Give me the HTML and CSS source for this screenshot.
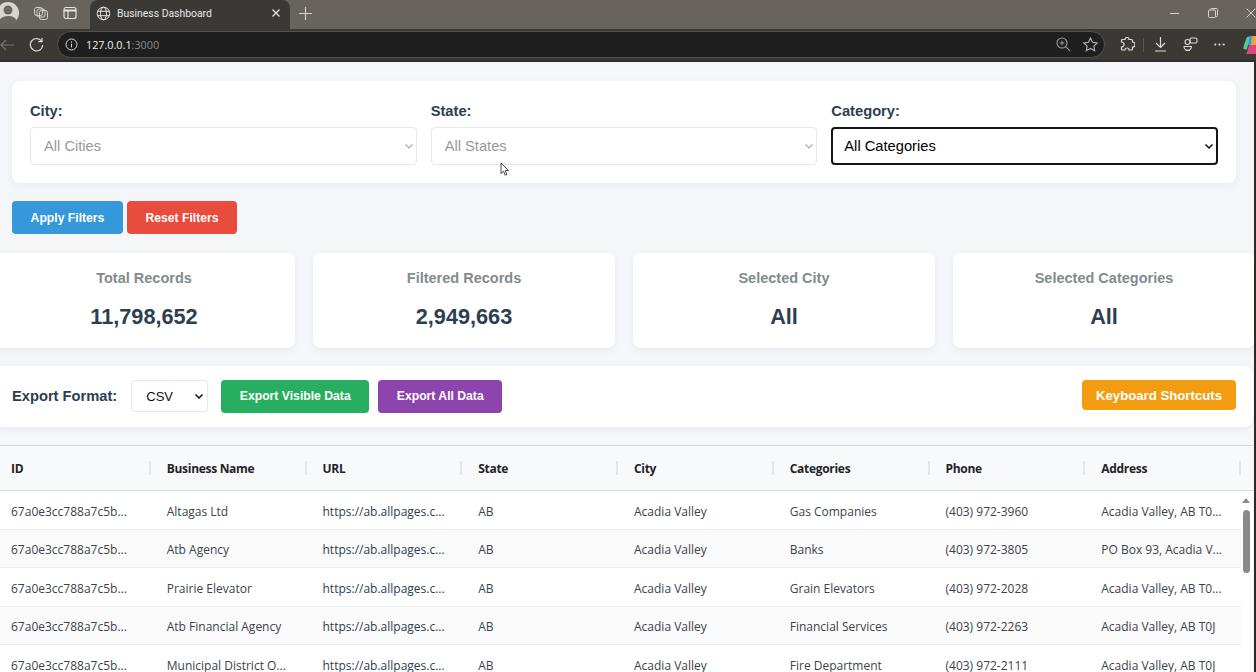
FILE: index.html
```html
<!DOCTYPE html>
<html lang="en">
<head>
    <meta charset="UTF-8">
    <title>Business Dashboard</title>
    <link rel="stylesheet" href="styles.css">
</head>
<body>
    <header class="browser">
        <div class="tabstrip">
            <div class="avatar">
                <svg width="22" height="22" viewBox="0 0 22 22"><circle cx="8" cy="11" r="11" fill="#d8d6d2"/><circle cx="8" cy="8" r="4.5" fill="#6b6862"/><path d="M-1 20c1-5 5-6 9-6s8 1 9 6a11 11 0 0 1-18 0z" fill="#6b6862"/></svg>
            </div>
            <svg class="tool-icon workspaces" width="16" height="16" viewBox="0 0 16 16" fill="none" stroke="#d5d3cf"><rect x="1.5" y="2.5" width="8" height="8" rx="2"/><rect x="4" y="4" width="8" height="8" rx="2"/><rect x="6.5" y="5.5" width="8" height="9" rx="2"/></svg>
            <svg class="tool-icon tabs-icon" width="14" height="14" viewBox="0 0 14 14" fill="none" stroke="#e6e4e0" stroke-width="1.2"><rect x="1" y="1.5" width="12" height="11" rx="2"/><path d="M1 4.5h12" stroke-width="2"/><path d="M5 4.5v8"/></svg>
            <div class="tab">
                <svg width="15" height="15" viewBox="0 0 15 15" fill="none" stroke="#e8e8e8"><circle cx="7.5" cy="7.5" r="6.3"/><ellipse cx="7.5" cy="7.5" rx="3" ry="6.3"/><path d="M1.5 5.3h12M1.5 9.7h12"/></svg>
                <span class="tab-title">Business Dashboard</span>
                <svg class="tab-close" width="10" height="10" viewBox="0 0 10 10" stroke="#e8e8e8" stroke-width="1.2"><path d="M1.5 1.5l7 7M8.5 1.5l-7 7"/></svg>
            </div>
            <svg class="new-tab" width="13" height="13" viewBox="0 0 13 13" stroke="#d5d3cf" stroke-width="1.1"><path d="M6.5 0v13M0 6.5h13"/></svg>
            <div class="window-controls">
                <svg width="10" height="10" viewBox="0 0 10 10" stroke="#d5d3cf"><path d="M0 5.5h9"/></svg>
                <svg width="10" height="10" viewBox="0 0 10 10" fill="none" stroke="#d5d3cf"><rect x="0.5" y="2" width="7" height="7.5" rx="1"/><path d="M2.5 2V1.5a1 1 0 0 1 1-1h5a1 1 0 0 1 1 1v6a1 1 0 0 1-1 1H7.5"/></svg>
                <svg width="10" height="10" viewBox="0 0 10 10" stroke="#d5d3cf"><path d="M0.5 0.5l9 9M9.5 0.5l-9 9"/></svg>
            </div>
        </div>
        <div class="toolbar">
            <svg class="back" width="14" height="12" viewBox="0 0 14 12" fill="none" stroke="#77756f" stroke-width="1.2"><path d="M14 6H1M6 1L1 6l5 5"/></svg>
            <svg class="reload" width="15" height="15" viewBox="0 0 15 15" fill="none" stroke="#dcdcdc" stroke-width="1.2"><path d="M12.8 4.5A6.2 6.2 0 1 0 13.7 8"/><path d="M13 1v3.7H9.3"/></svg>
            <div class="address">
                <svg width="13" height="13" viewBox="0 0 13 13" fill="none" stroke="#d8d8d8"><circle cx="6.5" cy="6.5" r="5.5"/><path d="M6.5 5.7v3.6M6.5 3.4v1.2"/></svg>
                <span class="url">127.0.0.1<span class="url-port">:3000</span></span>
                <svg class="zoom-icon" width="15" height="15" viewBox="0 0 15 15" fill="none" stroke="#9a9a9a" stroke-width="1.1"><circle cx="6" cy="6" r="5"/><path d="M9.7 9.7l4.5 4.5M3.7 6h4.6M6 3.7v4.6"/></svg>
                <svg width="15" height="15" viewBox="0 0 15 15" fill="none" stroke="#b4b4b4" stroke-width="1.1"><path d="M7.5 1l2 4.3 4.7.6-3.4 3.2.9 4.7-4.200-2.300-4.200 2.300.9-4.700L.8 5.900l4.700-.6z"/></svg>
            </div>
            <svg class="extensions" width="15" height="15" viewBox="0 0 15 15" fill="none" stroke="#dcdcdc" stroke-width="1.2"><path d="M5 2.500a2 2 0 0 1 4 0h2.500a1 1 0 0 1 1 1V5a2 2 0 0 1 0 5v2a1 1 0 0 1-1 1H9a2 2 0 0 0-4 0H2.500a1 1 0 0 1-1-1v-2a2 2 0 0 0 0-5V3.500a1 1 0 0 1 1-1z"/></svg>
            <span class="toolbar-sep"></span>
            <svg width="13" height="15" viewBox="0 0 13 15" fill="none" stroke="#dcdcdc" stroke-width="1.2"><path d="M6.500 0v10M2 6l4.500 4.500L11 6M1 14h11"/></svg>
            <svg width="15" height="15" viewBox="0 0 15 15" fill="none" stroke="#dcdcdc" stroke-width="1.1"><rect x="7" y="1" width="7" height="5" rx="1.500"/><circle cx="4.500" cy="5" r="2.500"/><path d="M1 9.500h7.500a3.500 3.500 0 0 1-7.500 0zM2.500 13.500h4.500"/></svg>
            <svg width="11" height="3" viewBox="0 0 11 3" fill="#dcdcdc"><circle cx="1.300" cy="1.500" r="1.100"/><circle cx="5.500" cy="1.500" r="1.100"/><circle cx="9.700" cy="1.500" r="1.100"/></svg>
            <svg class="copilot" width="16" height="18" viewBox="0 0 16 18"><path d="M4 1.500Q5 0 7 0h7v9H1z" fill="#2f9be8"/><path d="M3.500 2Q4.500 .5 6.500 1L4 13.500H1.500Q0 13 .5 11z" fill="#58c98a"/><path d="M9 0h7v9H8z" fill="#f2a03a"/><path d="M6 9h10v6l-3 3H3Q5 15 6 9z" fill="#e0457b"/></svg>
        </div>
    </header>

    <main class="page">
        <section class="filters">
            <div class="filter-group">
                <label class="filter-label">City:</label>
                <select class="filter-select is-disabled" disabled><option>All Cities</option></select>
            </div>
            <div class="filter-group">
                <label class="filter-label">State:</label>
                <select class="filter-select is-disabled" disabled><option>All States</option></select>
            </div>
            <div class="filter-group">
                <label class="filter-label">Category:</label>
                <select class="filter-select is-focused"><option>All Categories</option></select>
            </div>
        </section>
        <svg class="cursor" width="10" height="15" viewBox="0 0 10 15" fill="#fff" stroke="#333" stroke-width="0.9"><path d="M1 1v10.500l2.500-2.300 1.700 4 1.700-.7-1.700-3.900H8.500z"/></svg>

        <div class="filter-actions">
            <button class="btn btn-blue">Apply Filters</button>
            <button class="btn btn-red">Reset Filters</button>
        </div>

        <section class="stats">
            <div class="stat-card"><h3>Total Records</h3><p>11,798,652</p></div>
            <div class="stat-card"><h3>Filtered Records</h3><p>2,949,663</p></div>
            <div class="stat-card"><h3>Selected City</h3><p>All</p></div>
            <div class="stat-card"><h3>Selected Categories</h3><p>All</p></div>
        </section>

        <section class="export-bar">
            <span class="export-label">Export Format:</span>
            <select class="export-select"><option>CSV</option></select>
            <button class="btn btn-green">Export Visible Data</button>
            <button class="btn btn-purple">Export All Data</button>
            <button class="btn btn-orange">Keyboard Shortcuts</button>
        </section>

        <section class="table-wrap">
            <div class="table-head">
                <div class="cell">ID</div>
                <div class="cell">Business Name</div>
                <div class="cell">URL</div>
                <div class="cell">State</div>
                <div class="cell">City</div>
                <div class="cell">Categories</div>
                <div class="cell">Phone</div>
                <div class="cell">Address</div>
            </div>
            <div class="table-body">
                <div class="rows">
                    <div class="row">
                        <div class="cell">67a0e3cc788a7c5b...</div><div class="cell">Altagas Ltd</div><div class="cell link">https://ab.allpages.c...</div><div class="cell">AB</div><div class="cell">Acadia Valley</div><div class="cell">Gas Companies</div><div class="cell">(403) 972-3960</div><div class="cell">Acadia Valley, AB T0...</div>
                    </div>
                    <div class="row alt">
                        <div class="cell">67a0e3cc788a7c5b...</div><div class="cell">Atb Agency</div><div class="cell link">https://ab.allpages.c...</div><div class="cell">AB</div><div class="cell">Acadia Valley</div><div class="cell">Banks</div><div class="cell">(403) 972-3805</div><div class="cell">PO Box 93, Acadia V...</div>
                    </div>
                    <div class="row">
                        <div class="cell">67a0e3cc788a7c5b...</div><div class="cell">Prairie Elevator</div><div class="cell link">https://ab.allpages.c...</div><div class="cell">AB</div><div class="cell">Acadia Valley</div><div class="cell">Grain Elevators</div><div class="cell">(403) 972-2028</div><div class="cell">Acadia Valley, AB T0...</div>
                    </div>
                    <div class="row alt">
                        <div class="cell">67a0e3cc788a7c5b...</div><div class="cell">Atb Financial Agency</div><div class="cell link">https://ab.allpages.c...</div><div class="cell">AB</div><div class="cell">Acadia Valley</div><div class="cell">Financial Services</div><div class="cell">(403) 972-2263</div><div class="cell">Acadia Valley, AB T0J</div>
                    </div>
                    <div class="row">
                        <div class="cell">67a0e3cc788a7c5b...</div><div class="cell">Municipal District O...</div><div class="cell link">https://ab.allpages.c...</div><div class="cell">AB</div><div class="cell">Acadia Valley</div><div class="cell">Fire Department</div><div class="cell">(403) 972-2111</div><div class="cell">Acadia Valley, AB T0J</div>
                    </div>
                </div>
                <div class="scrollbar">
                    <span class="scroll-up"></span>
                    <span class="scroll-thumb"></span>
                </div>
            </div>
        </section>
    </main>
</body>
</html>
```

FILE: styles.css
```css
html, body {
    margin: 0;
    height: 672px;
    overflow: hidden;
}
body {
    font-family: "Liberation Sans", Arial, sans-serif;
    background-color: #f4f6fa;
}

/* browser frame */
.browser {
    height: 62px;
    background-color: #3a3936;
    border-bottom: 2px solid #2f2e2c;
    box-sizing: border-box;
    font-family: "Open Sans", sans-serif;
}
.tabstrip {
    height: 29px;
    padding-bottom: 3px;
    box-sizing: border-box;
    background-color: #68645d;
    display: flex;
    align-items: center;
}
.avatar {
    width: 33px;
    display: flex;
}
.tool-icon.tabs-icon {
    margin-left: 14px;
}
.tab {
    width: 200px;
    height: 29px;
    margin: 3px 0 0 13px;
    padding: 0 6px 3px;
    box-sizing: border-box;
    background-color: #3a3936;
    border-radius: 8px 8px 0 0;
    display: flex;
    align-items: center;
    color: #e8e8e8;
    font-family: Roboto, sans-serif;
    font-size: 10.400px;
}
.tab-title {
    margin-left: 6px;
    flex: 1;
}
.tab-close {
    margin-right: 3px;
}
.new-tab {
    margin-left: 9px;
}
.window-controls {
    margin-left: auto;
    display: flex;
    gap: 28px;
}
.toolbar {
    height: 31px;
    display: flex;
    align-items: center;
    gap: 16px;
    overflow: hidden;
}
.toolbar > * {
    flex-shrink: 0;
}
.reload {
    margin-left: -1px;
}
.address {
    width: 1048px;
    height: 27px;
    margin-left: -3px;
    padding: 0 6px 0 7px;
    box-sizing: border-box;
    background-color: #1f1f1f;
    border: 1px solid #55534f;
    border-radius: 14px;
    display: flex;
    align-items: center;
    gap: 8px;
    color: #f0f0f0;
    font-size: 10.800px;
}
.url {
    flex: 1;
}
.url-port {
    color: #8b8b8b;
}
.zoom-icon {
    margin-right: 4px;
}
.extensions {
    margin-left: -1px;
}
.toolbar-sep {
    width: 1px;
    height: 14px;
    background-color: #5a5855;
    margin: 0 -6.500px 0 -8px;
}
.copilot {
    margin-left: 2px;
}

/* page */
.page {
    position: relative;
    height: 610px;
    box-sizing: border-box;
    border-right: 2px solid #2b2a28;
    overflow: hidden;
}
.filters {
    margin: 19px 18px 0 12px;
    padding: 20px 18px 0;
    height: 102px;
    box-sizing: border-box;
    background-color: #fff;
    border-radius: 8px;
    box-shadow: 0 2px 8px rgba(0, 0, 0, 0.05);
    display: grid;
    grid-template-columns: repeat(3, 1fr);
    gap: 14px;
}
.filter-label {
    display: block;
    font-size: 14.700px;
    font-weight: bold;
    color: #2c3e50;
    line-height: 20px;
    margin-bottom: 6px;
}
.filter-select {
    width: 100%;
    height: 38px;
    padding: 0 13px;
    font-family: "Liberation Sans", Arial, sans-serif;
    font-size: 14.700px;
    border: 1px solid #e6e8ec;
    border-radius: 4px;
    box-sizing: border-box;
    appearance: none;
    background: #fff url("data:image/svg+xml,%3Csvg xmlns='http://www.w3.org/2000/svg' width='8' height='5' fill='none' stroke='%23a8a8a8' stroke-width='1.2'%3E%3Cpath d='M.5.5l3.500 3.500 3.500-3.500'/%3E%3C/svg%3E") no-repeat right 3px center;
}
.filter-select.is-disabled {
    color: #9a9a9a;
    opacity: 1;
}
.filter-select.is-focused {
    color: #000;
    border: 2px solid #151515;
    border-radius: 4px;
    padding: 0 11px;
    background: #fff url("data:image/svg+xml,%3Csvg xmlns='http://www.w3.org/2000/svg' width='8' height='5' fill='none' stroke='%23111' stroke-width='1.5'%3E%3Cpath d='M.5.5l3.500 3.500 3.500-3.500'/%3E%3C/svg%3E") no-repeat right 3px center;
}
.cursor {
    position: absolute;
    left: 500px;
    top: 100px;
}

.filter-actions {
    margin: 18px 0 0 12px;
    display: flex;
    gap: 4px;
}
.btn {
    height: 33px;
    border: none;
    border-radius: 4px;
    color: #fff;
    font-family: "Liberation Sans", Arial, sans-serif;
    font-size: 12.200px;
    font-weight: bold;
    cursor: pointer;
    padding: 0;
}
.btn-blue {
    width: 111px;
    background-color: #3498db;
}
.btn-red {
    width: 110px;
    background-color: #e74c3c;
}
.btn-green {
    width: 148px;
    padding-bottom: 2px;
    background-color: #27ae60;
}
.btn-purple {
    width: 124px;
    padding-bottom: 2px;
    background-color: #8e44ad;
}
.btn-orange {
    width: 154px;
    height: 30px;
    margin: 0 0 3px auto;
    font-size: 13.200px;
    background-color: #f39c12;
}

/* stats */
.stats {
    margin: 19px 0 0 -7px;
    display: grid;
    grid-template-columns: repeat(4, 302px);
    gap: 18px;
}
.stat-card {
    height: 95px;
    background-color: #fff;
    border-radius: 8px;
    box-shadow: 0 2px 8px rgba(0, 0, 0, 0.05);
    text-align: center;
}
.stat-card h3 {
    margin: 0;
    padding-top: 16px;
    font-size: 14.500px;
    line-height: 18px;
    font-weight: bold;
    color: #7f8c8d;
}
.stat-card p {
    margin: 16px 0 0;
    font-size: 21.700px;
    line-height: 28px;
    font-weight: bold;
    color: #2c3e50;
}

/* export */
.export-bar {
    margin: 18px 1px 0 -7px;
    height: 61px;
    padding: 0 17px 0 19px;
    box-sizing: border-box;
    background-color: #fff;
    border-radius: 8px;
    box-shadow: 0 2px 8px rgba(0, 0, 0, 0.05);
    display: flex;
    align-items: center;
}
.export-label {
    padding-bottom: 1px;
    font-size: 14.700px;
    font-weight: bold;
    color: #2c3e50;
}
.export-select {
    width: 77px;
    height: 32px;
    margin: 0 13px 1px 14px;
    padding: 0 14px;
    font-family: "Liberation Sans", Arial, sans-serif;
    font-size: 13px;
    color: #111;
    border: 1px solid #e6e8ec;
    border-radius: 4px;
    appearance: none;
    background: #fff url("data:image/svg+xml,%3Csvg xmlns='http://www.w3.org/2000/svg' width='8' height='5' fill='none' stroke='%23111' stroke-width='1.5'%3E%3Cpath d='M.5.5l3.500 3.500 3.500-3.500'/%3E%3C/svg%3E") no-repeat right 4px center;
}
.btn-green + .btn-purple {
    margin-left: 9px;
}

/* table */
.table-wrap {
    margin: 18px 1px 0 -7px;
    background-color: #fff;
    border-top: 1px solid #d5d8dc;
    font-family: "Open Sans", sans-serif;
    font-size: 12px;
}
.table-head,
.row {
    display: grid;
    grid-template-columns: repeat(8, 155.750px);
}
.table-head {
    height: 45px;
    box-sizing: border-box;
    align-items: center;
    background-color: #f8f9fa;
    border-bottom: 1px solid #d5d8dc;
    font-weight: 700;
    letter-spacing: -0.300px;
    color: #1f2328;
}
.table-head .cell {
    height: 14px;
    margin-right: -2px;
    padding-top: 1px;
    line-height: 14px;
    border-right: 2px solid #e4e7eb;
}
.cell {
    padding-left: 18px;
    box-sizing: border-box;
    white-space: nowrap;
}
.table-body {
    display: flex;
}
.rows {
    flex: 1;
}
.row {
    height: 38.500px;
    align-items: center;
    color: #3b434b;
    border-bottom: 1px solid #eceef0;
    box-sizing: border-box;
}
.row .cell {
    padding-top: 3px;
}
.row.alt {
    background-color: #fafafa;
}
.link {
    color: #2c3e50;
}
.scrollbar {
    width: 12px;
    position: relative;
    background-color: #fff;
}
.scroll-up {
    position: absolute;
    top: 7px;
    left: 1px;
    border-left: 4px solid transparent;
    border-right: 4px solid transparent;
    border-bottom: 5px solid #8a8a8a;
}
.scroll-thumb {
    position: absolute;
    top: 19px;
    left: 2px;
    width: 7px;
    height: 63px;
    border-radius: 4px;
    background-color: #8a8a8a;
}
```
